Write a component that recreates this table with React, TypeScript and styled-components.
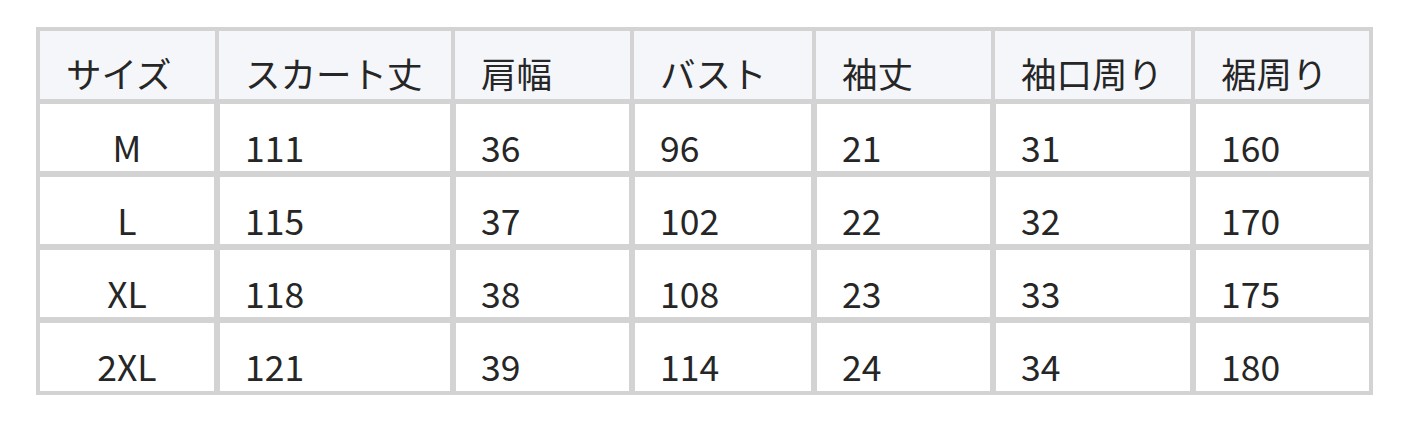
import styled, { createGlobalStyle } from 'styled-components'

const GlobalStyle = createGlobalStyle`
  body {
    margin: 0;
    background: #fff;
    font-family: "Noto Sans CJK JP", "Noto Sans", sans-serif;
    color: #262626;
  }
`

const Page = styled.div`
  padding: 27px 0 0 36px;
`

const Table = styled.table`
  border-collapse: separate;
  border-spacing: 0;
  table-layout: fixed;
  width: 1337px;
  border: 2px solid #d3d3d3;
  font-size: 35.5px;
  line-height: 41px;
`

const HeadCell = styled.th<{ $w: number }>`
  box-sizing: border-box;
  width: ${({ $w }) => $w}px;
  height: 72px;
  padding: 21px 0 0 26px;
  border: 2px solid #d3d3d3;
  background: #f5f6fa;
  font-weight: 400;
  text-align: left;
  vertical-align: top;
  white-space: nowrap;
`

const Cell = styled.td<{ $center?: boolean }>`
  box-sizing: border-box;
  height: 73px;
  padding: 22px 0 0 ${({ $center }) => ($center ? 0 : 25)}px;
  border: 3px solid #d3d3d3;
  text-align: ${({ $center }) => ($center ? 'center' : 'left')};
  vertical-align: top;
  &:first-child { border-left-width: 2px; }
  &:last-child { border-right-width: 2px; }
  tr:last-child > & { border-bottom-width: 2px; }
`

const columns = [
  { label: 'サイズ', w: 179 },
  { label: 'スカート丈', w: 236 },
  { label: '肩幅', w: 179 },
  { label: 'バスト', w: 182 },
  { label: '袖丈', w: 179 },
  { label: '袖口周り', w: 200 },
  { label: '裾周り', w: 178 },
]

const rows = [
  ['M', '111', '36', '96', '21', '31', '160'],
  ['L', '115', '37', '102', '22', '32', '170'],
  ['XL', '118', '38', '108', '23', '33', '175'],
  ['2XL', '121', '39', '114', '24', '34', '180'],
]

export default function App() {
  return (
    <Page>
      <GlobalStyle />
      <Table>
        <thead>
          <tr>
            {columns.map((col) => (
              <HeadCell key={col.label} $w={col.w}>{col.label}</HeadCell>
            ))}
          </tr>
        </thead>
        <tbody>
          {rows.map((row) => (
            <tr key={row[0]}>
              {row.map((value, i) => (
                <Cell key={i} $center={i === 0}>{value}</Cell>
              ))}
            </tr>
          ))}
        </tbody>
      </Table>
    </Page>
  )
}
